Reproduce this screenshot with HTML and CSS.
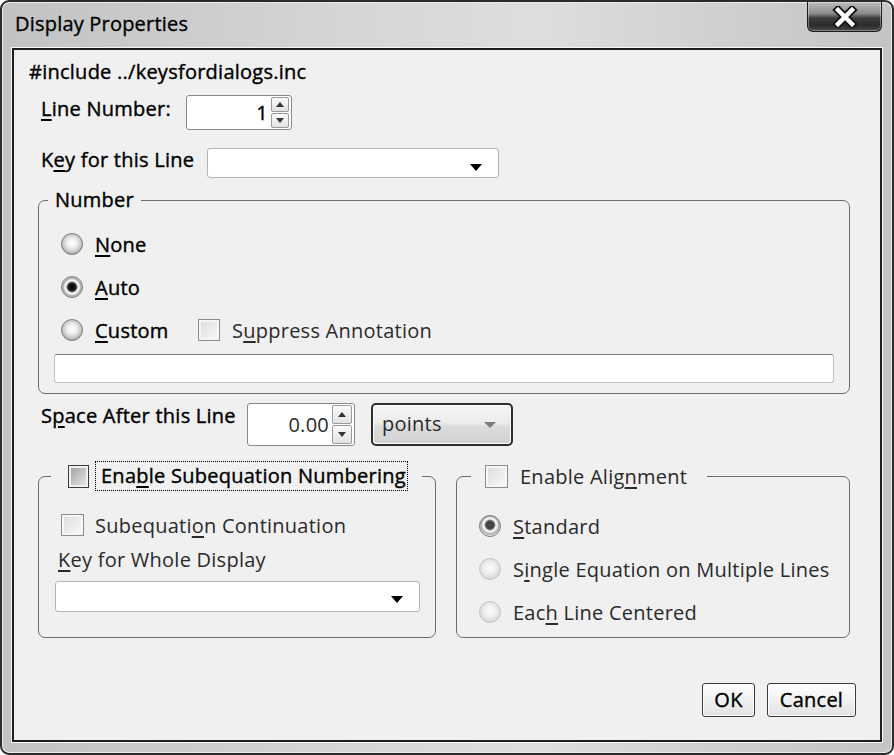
FILE: index.html
```html
<!DOCTYPE html>
<html>
<head>
<meta charset="utf-8">
<title>Display Properties</title>
<link rel="stylesheet" href="styles.css">
</head>
<body>
<div class="window">
  <div class="titlebar">
    <div class="title">Display Properties</div>
    <div class="close">
      <svg width="30" height="22" viewBox="0 0 30 22">
        <path d="M8 4 L22 18 M22 4 L8 18" stroke="#111" stroke-width="8" stroke-linecap="square" fill="none"/>
        <path d="M8 4 L22 18 M22 4 L8 18" stroke="#fff" stroke-width="4.5" stroke-linecap="square" fill="none"/>
      </svg>
    </div>
  </div>
  <div class="client">
    <div class="include dark">#include ../keysfordialogs.inc</div>

    <div class="row row-linenum">
      <div class="lbl dark w-linenum"><u>L</u>ine Number:</div>
      <div class="spin spin-line">
        <span class="val dark">1</span>
        <span class="spinbtns"><span class="sb"><i class="tri-up"></i></span><span class="sb"><i class="tri-down"></i></span></span>
      </div>
    </div>

    <div class="row row-key">
      <div class="lbl dark w-key">K<u>e</u>y for this Line</div>
      <div class="combo combo-key"><i class="arrow"></i></div>
    </div>

    <fieldset class="group number">
      <legend class="legend-number dark">Number</legend>
      <div class="radio-row first">
        <span class="radio"></span><span class="dark"><u>N</u>one</span>
      </div>
      <div class="radio-row">
        <span class="radio checked"></span><span class="dark"><u>A</u>uto</span>
      </div>
      <div class="radio-row">
        <span class="radio"></span><span class="dark w-custom"><u>C</u>ustom</span>
        <span class="cb"></span><span class="reg">S<u>u</u>ppress Annotation</span>
      </div>
      <div class="textfield"></div>
    </fieldset>

    <div class="row row-space">
      <div class="lbl dark w-space">S<u>p</u>ace After this Line</div>
      <div class="spin spin-space">
        <span class="val reg">0.00</span>
        <span class="spinbtns"><span class="sb"><i class="tri-up"></i></span><span class="sb"><i class="tri-down"></i></span></span>
      </div>
      <div class="units"><span class="reg">points</span><i class="arrow-gray"></i></div>
    </div>

    <div class="groups">
      <fieldset class="group subeq">
        <legend class="legend-subeq">
          <span class="cb focus-cb"></span><span class="focus dark">Ena<u>b</u>le Subequation Numbering</span>
        </legend>
        <div class="check-row">
          <span class="cb"></span><span class="reg">Subequati<u>o</u>n Continuation</span>
        </div>
        <div class="whole-lbl reg"><u>K</u>ey for Whole Display</div>
        <div class="combo combo-whole"><i class="arrow"></i></div>
      </fieldset>

      <fieldset class="group align">
        <legend class="legend-align">
          <span class="cb"></span><span class="reg">Enable Alig<u>n</u>ment</span>
        </legend>
        <div class="radio-row first-r">
          <span class="radio checked gray"></span><span class="reg"><u>S</u>tandard</span>
        </div>
        <div class="radio-row">
          <span class="radio disabled"></span><span class="reg">S<u>i</u>ngle Equation on Multiple Lines</span>
        </div>
        <div class="radio-row">
          <span class="radio disabled"></span><span class="reg">Eac<u>h</u> Line Centered</span>
        </div>
      </fieldset>
    </div>

    <div class="buttons">
      <div class="btn btn-ok dark">OK</div>
      <div class="btn btn-cancel dark">Cancel</div>
    </div>
  </div>
</div>
</body>
</html>
```

FILE: styles.css
```css
* { box-sizing: border-box; }

html, body {
  margin: 0;
  padding: 0;
  background: #ffffff;
}

body {
  font-family: "Open Sans", "Noto Sans", "Liberation Sans", sans-serif;
  font-size: 20px;
  letter-spacing: 0.25px;
  color: #111;
}

u { text-decoration: underline; text-underline-offset: 3px; text-decoration-thickness: 1.5px; }

.dark { color: #000; -webkit-text-stroke: 0.4px #000; }
.reg { color: #2a2a2a; }

.window {
  width: 894px;
  height: 755px;
  border: 2px solid #2a2a2a;
  border-radius: 9px;
  background: linear-gradient(to right, #c2c2c2 0%, #d4d4d4 35%, #dedede 60%, #cdcdcd 85%, #c4c4c4 100%);
  box-shadow: inset 0 0 0 1px #ececec;
  display: flex;
  flex-direction: column;
  overflow: hidden;
}

.titlebar {
  height: 46px;
  display: flex;
  justify-content: space-between;
  align-items: flex-start;
}

.title {
  padding: 10px 0 0 13px;
  font-size: 20px;
  letter-spacing: 0.2px;
  line-height: 24px;
  color: #000;
  -webkit-text-stroke: 0.35px #000;
}

.close {
  width: 75px;
  height: 30px;
  margin-right: 10px;
  border: 1px solid #1a1a1a;
  border-top: none;
  border-radius: 0 0 6px 6px;
  background: linear-gradient(to bottom, #bdbdbd 0%, #8a8a8a 40%, #3e3e3e 55%, #2c2c2c 80%, #4a4a4a 100%);
  box-shadow: inset 0 0 0 1px rgba(255,255,255,0.35);
  display: flex;
  justify-content: center;
  align-items: center;
}

.client {
  margin: 0 10px;
  height: 694px;
  border: 2px solid #1e1e1e;
  background: #f0f0f0;
  box-shadow: 0 0 0 1px #f6f6f6;
}

.include {
  margin-top: 10px;
  padding-left: 15px;
  line-height: 24px;
  height: 24px;
}

.row {
  display: flex;
  align-items: flex-start;
  padding-left: 27px;
}

.lbl { line-height: 24px; flex: none; }
.w-linenum { width: 145px; margin-top: 2px; }
.w-key { width: 166px; }
.w-space { width: 206px; margin-top: 1px; }

.row-linenum { margin-top: 11px; height: 35px; }
.row-key { margin-top: 18px; height: 30px; }
.row-space { margin-top: 9px; height: 43px; }

.spin {
  background: #fff;
  border: 1px solid #8a8a8a;
  border-radius: 3px;
  display: flex;
  justify-content: flex-end;
  align-items: center;
  padding-right: 2px;
}
.spin-line { width: 106px; height: 35px; }
.spin-space { width: 108px; height: 43px; }

.spin .val { line-height: 24px; margin-right: 3px; }

.spinbtns {
  display: flex;
  flex-direction: column;
  gap: 1px;
}
.spin-line .sb { width: 18px; height: 15px; }
.spin-space .sb { width: 20px; height: 19px; }
.sb {
  border: 1px solid #9a9a9a;
  border-radius: 2px;
  background: linear-gradient(#fafafa, #e2e2e2);
  display: flex;
  justify-content: center;
  align-items: center;
}
.tri-up {
  width: 0; height: 0;
  border-left: 4px solid transparent;
  border-right: 4px solid transparent;
  border-bottom: 5px solid #333;
}
.tri-down {
  width: 0; height: 0;
  border-left: 4px solid transparent;
  border-right: 4px solid transparent;
  border-top: 5px solid #333;
}

.combo {
  background: #fff;
  border: 1px solid #b4b4b4;
  border-radius: 3px;
  display: flex;
  justify-content: flex-end;
  align-items: center;
}
.combo-key { width: 292px; height: 30px; padding-right: 16px; padding-top: 8px; }
.arrow {
  width: 0; height: 0;
  border-left: 6px solid transparent;
  border-right: 6px solid transparent;
  border-top: 7px solid #000;
}

.group {
  margin: 0;
  padding: 0;
  border: 1px solid #6c6c6c;
  border-radius: 7px;
  min-width: 0;
}

.number {
  margin: 10px 30px 0 24px;
  padding-bottom: 10px;
}
.legend-number {
  margin-left: 9px;
  padding: 0 7px;
  line-height: 24px;
}

.radio-row {
  display: flex;
  align-items: center;
  height: 30px;
  margin-top: 13px;
  padding-left: 22px;
}
.number .radio-row.first { margin-top: 17px; }
.align .radio-row.first-r { margin-top: 20px; }

.radio {
  flex: none;
  width: 22px;
  height: 22px;
  border-radius: 50%;
  border: 1px solid #7c7c7c;
  background: radial-gradient(circle at 50% 45%, #ffffff 0, #f2f2f2 30%, #c6c6c6 62%, #9a9a9a 78%, #e8e8e8 92%);
  margin-right: 12px;
}
.radio.checked {
  background: radial-gradient(circle at 50% 50%, #000 0, #111 3px, #444 4.5px, #fafafa 6px, #e4e4e4 7.5px, #a2a2a2 9px, #e6e6e6 10.5px);
}
.radio.checked.gray {
  background: radial-gradient(circle at 50% 45%, #555 0, #3a3a3a 3px, #666 4.5px, #fafafa 6px, #e4e4e4 7.5px, #a2a2a2 9px, #e6e6e6 10.5px);
}
.radio.disabled {
  border-color: #c6c6c6;
  background: radial-gradient(circle at 50% 45%, #fbfbfb 0, #eeeeee 40%, #d6d6d6 75%, #ececec 92%);
}

.w-custom { width: 103px; flex: none; }

.cb {
  flex: none;
  width: 22px;
  height: 22px;
  border: 1px solid #8c8c8c;
  background: linear-gradient(135deg, #dadada, #fbfbfb);
  box-shadow: inset 0 0 0 2px #f6f6f6;
  margin-right: 12px;
}

.textfield {
  margin: 9px 15px 0 15px;
  height: 29px;
  background: #fff;
  border: 1px solid #c2c2c2;
  border-top-color: #7a7a7a;
  border-radius: 3px;
}

.units {
  margin-left: 16px;
  width: 142px;
  height: 43px;
  border: 2px solid #2e2e2e;
  border-radius: 5px;
  background: linear-gradient(#f6f6f6 0%, #ececec 45%, #dcdcdc 55%, #d2d2d2 100%);
  box-shadow: inset 0 0 0 1px #fbfbfb;
  display: flex;
  justify-content: space-between;
  align-items: center;
  padding: 0 15px 0 9px;
}
.units span { line-height: 24px; margin-top: -1px; }
.arrow-gray {
  width: 0; height: 0;
  border-left: 6px solid transparent;
  border-right: 6px solid transparent;
  border-top: 6px solid #7c7c7c;
}

.groups {
  display: flex;
  gap: 20px;
  margin: 15px 30px 0 24px;
}

.subeq {
  width: 398px;
  flex: none;
  padding-bottom: 25px;
}
.legend-subeq {
  margin-left: 12px;
  padding: 0 14px 0 17px;
  height: 30px;
  display: flex;
  align-items: center;
}
.legend-subeq .cb { margin-right: 6px; width: 21px; height: 23px; }
.focus-cb {
  border-color: #3c3c3c !important;
  background: linear-gradient(135deg, #9a9a9a, #eeeeee) !important;
  box-shadow: inset 0 0 0 2px #f0f0f0 !important;
}
.focus {
  border: 1px dotted #000;
  height: 30px;
  line-height: 27px;
  padding: 0 1px 0 5px;
  white-space: nowrap;
}

.check-row {
  display: flex;
  align-items: center;
  height: 24px;
  margin-top: 22px;
  padding-left: 22px;
}
.check-row .cb { width: 23px; height: 22px; margin-right: 11px; }

.whole-lbl {
  margin-top: 11px;
  padding-left: 19px;
  line-height: 24px;
}

.combo-whole {
  margin: 9px 15px 0 16px;
  height: 31px;
  padding-right: 16px;
  padding-top: 6px;
}

.align {
  flex: 1;
  padding-bottom: 10px;
}
.legend-align {
  margin-left: 14px;
  padding: 0 20px 0 14px;
  height: 30px;
  display: flex;
  align-items: center;
}
.legend-align .cb { width: 23px; height: 23px; margin-right: 12px; }

.buttons {
  display: flex;
  justify-content: flex-end;
  gap: 12px;
  margin-top: 45px;
  padding-right: 24px;
}
.btn {
  height: 34px;
  border: 1px solid #3a3a3a;
  border-radius: 3px;
  background: linear-gradient(#fdfdfd 0%, #f1f1f1 50%, #e2e2e2 100%);
  box-shadow: inset 0 0 0 1px #ffffff;
  display: flex;
  justify-content: center;
  align-items: center;
  line-height: 24px;
}
.btn-ok { width: 53px; }
.btn-cancel { width: 89px; }
```
